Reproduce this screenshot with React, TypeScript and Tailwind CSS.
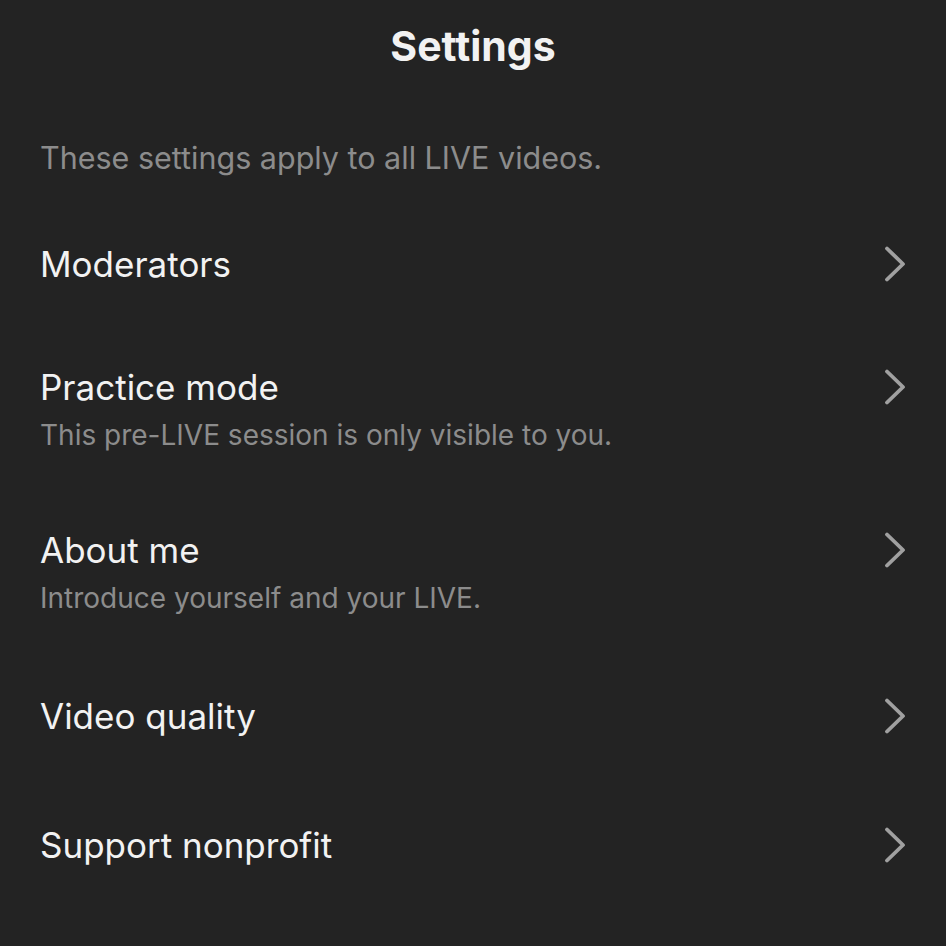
const rows = [
  { title: "Moderators", pad: "pt-[69px]" },
  {
    title: "Practice mode",
    subtitle: "This pre-LIVE session is only visible to you.",
    pad: "pt-[83px]",
  },
  {
    title: "About me",
    subtitle: "Introduce yourself and your LIVE.",
    pad: "pt-[78px]",
  },
  { title: "Video quality", pad: "pt-[81px]" },
  { title: "Support nonprofit", pad: "pt-[89px]" },
];

function Chevron() {
  return (
    <svg width="22" height="36" viewBox="0 0 22 36" fill="none">
      <path
        d="M3 2.5 L19 18 L3 33.5"
        stroke="#a0a0a0"
        strokeWidth="3.8"
        strokeLinecap="round"
        strokeLinejoin="round"
      />
    </svg>
  );
}

export default function App() {
  return (
    <div
      className="w-[946px] h-[946px] bg-[#232323] text-[#f2f2f2] overflow-hidden"
      style={{ fontFamily: "Inter, 'Noto Sans', sans-serif" }}
    >
      <header className="pt-[21px] text-center">
        <h1 className="text-[41px] leading-[50px] font-bold">Settings</h1>
      </header>
      <p className="mt-[70px] px-[40px] text-[30.5px] leading-[34px] text-[#8c8c8c]">
        These settings apply to all LIVE videos.
      </p>
      <ul>
        {rows.map((row) => (
          <li key={row.title} className={`${row.pad} pl-[40px] pr-[40px]`}>
            <div className="flex items-center justify-between">
              <span className="text-[35px] leading-[40px]">{row.title}</span>
              <Chevron />
            </div>
            {row.subtitle && (
              <p className="mt-[11px] text-[28px] leading-[34px] text-[#8c8c8c]">
                {row.subtitle}
              </p>
            )}
          </li>
        ))}
      </ul>
    </div>
  );
}
